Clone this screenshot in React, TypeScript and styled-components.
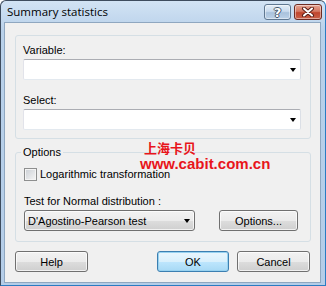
import styled, { createGlobalStyle } from "styled-components";

const GlobalStyle = createGlobalStyle`
  html, body { margin: 0; padding: 0; background: #fff; }
  body { font-family: "Liberation Sans", Tahoma, sans-serif; font-size: 11px; color: #000; }
  * { box-sizing: border-box; }
`;

const Window = styled.div`
  position: relative;
  width: 326px;
  height: 286px;
  display: flex;
  flex-direction: column;
  background: linear-gradient(#d2e3f4, #b9d1ea 30px, #b4cde8);
  border: 1px solid #3e4c5e;
  border-right-color: #2a7cc2;
  border-bottom-color: #2a7cc2;
  border-radius: 6px 6px 0 0;
  padding: 0 4px 2px 3px;
`;

const TitleBar = styled.div`
  height: 21px;
  display: flex;
  align-items: flex-start;
  justify-content: space-between;
  margin-right: -1px;
`;

const Title = styled.span`
  font-family: "Open Sans", "Noto Sans", sans-serif;
  font-size: 11.5px;
  line-height: 16px;
  padding: 3px 0 0 3px;
  color: #000;
`;

const CaptionButtons = styled.div`
  display: flex;
  gap: 3px;
  padding-top: 3px;
`;

const CaptionButton = styled.div<{ $close?: boolean }>`
  width: ${(p) => (p.$close ? "28px" : "27px")};
  height: 16px;
  border: 1px solid ${(p) => (p.$close ? "#6d2b22" : "#5f7891")};
  border-radius: 3px;
  display: flex;
  align-items: center;
  justify-content: center;
  background: ${(p) =>
    p.$close
      ? "linear-gradient(#e5a493, #d47862 45%, #c0452d 55%, #c9624a)"
      : "linear-gradient(#e4eef8, #c9dbee 45%, #a9c2dc 55%, #bcd2e8)"};
  box-shadow: inset 0 0 0 1px rgba(255, 255, 255, 0.45);
`;

const HelpGlyph = styled.span`
  font-family: "DejaVu Sans", sans-serif;
  font-weight: bold;
  font-size: 13px;
  line-height: 13px;
  color: #fff;
  text-shadow: -1px 0 #45566a, 1px 0 #45566a, 0 -1px #45566a, 0 1px #45566a;
`;

const Client = styled.div`
  flex: 1;
  background: #f0f0f0;
  border: 1px solid #8fa7c0;
  padding: 12px 9px 0 10px;
  display: flex;
  flex-direction: column;
`;

const Group = styled.div`
  border: 1px solid #d5dfe5;
  border-radius: 3px;
  padding: 8px 9px 8px 7px;
`;

const Label = styled.div`
  line-height: 13px;
  margin-bottom: 2px;
`;

const Field = styled.div<{ $gap?: number }>`
  margin-top: ${(p) => p.$gap ?? 0}px;
`;

const Combo = styled.div<{ $list?: boolean; $width?: number }>`
  position: relative;
  height: 21px;
  width: ${(p) => (p.$width ? `${p.$width}px` : "100%")};
  display: flex;
  align-items: center;
  padding-left: 3px;
  border: 1px solid;
  border-radius: ${(p) => (p.$list ? "3px" : "2px")};
  border-color: ${(p) => (p.$list ? "#707070" : "#abadb3 #dbdfe6 #e3e9ef #e2e3ea")};
  background: ${(p) =>
    p.$list ? "linear-gradient(#f2f2f2, #ebebeb 50%, #dddddd 51%, #cfcfcf)" : "#fff"};
  box-shadow: ${(p) => (p.$list ? "inset 0 0 0 1px rgba(255,255,255,0.7)" : "none")};
`;

const Arrow = styled.span`
  position: absolute;
  right: 4px;
  top: 8px;
  width: 0;
  height: 0;
  border-left: 3.5px solid transparent;
  border-right: 3.5px solid transparent;
  border-top: 4px solid #000;
`;

const Fieldset = styled.fieldset`
  margin: 7px 0 0 0;
  padding: 0 12px 10px 8px;
  border: 1px solid #d5dfe5;
  border-radius: 3px;
  min-width: 0;
`;

const Legend = styled.legend`
  padding: 0 2px;
  margin-left: -3px;
  line-height: 13px;
`;

const CheckRow = styled.label`
  display: flex;
  align-items: center;
  gap: 3px;
  margin-top: 9px;
  line-height: 13px;
`;

const CheckBox = styled.span`
  width: 13px;
  height: 13px;
  border: 1px solid #8e8f8f;
  background: linear-gradient(135deg, #cbcfd5, #f6f6f6);
  box-shadow: inset 0 0 0 1px #f4f4f4;
`;

const Row = styled.div`
  display: flex;
  justify-content: space-between;
  align-items: center;
`;

const Button = styled.button<{ $default?: boolean; $width?: number }>`
  height: 21px;
  width: ${(p) => p.$width ?? 73}px;
  padding: 0;
  font: inherit;
  color: #000;
  border: 1px solid ${(p) => (p.$default ? "#3c7fb1" : "#707070")};
  border-radius: 3px;
  background: ${(p) =>
    p.$default
      ? "linear-gradient(#eaf6fd, #d9f0fc 50%, #bee6fd 51%, #a7d9f5)"
      : "linear-gradient(#f2f2f2, #ebebeb 50%, #dddddd 51%, #cfcfcf)"};
  box-shadow: inset 0 0 0 1px ${(p) => (p.$default ? "#98d2f0" : "rgba(255,255,255,0.7)")};
`;

const Footer = styled.div`
  display: flex;
  align-items: center;
  margin-top: 9px;
  margin-right: 1px;
`;

const Spacer = styled.div`
  flex: 1;
`;

const Watermark = styled.div`
  position: absolute;
  left: 139px;
  top: 139px;
  color: #e8151b;
  font-weight: bold;
  pointer-events: none;
`;

const WmCn = styled.div`
  font-family: "Noto Sans CJK SC", sans-serif;
  font-size: 13px;
  line-height: 16px;
  padding-left: 4px;
`;

const WmUrl = styled.div`
  font-family: "Liberation Sans", Arial, sans-serif;
  font-size: 15px;
  line-height: 14px;
  margin-top: 1px;
`;

export default function App() {
  return (
    <>
      <GlobalStyle />
      <Window>
        <TitleBar>
          <Title>Summary statistics</Title>
          <CaptionButtons>
            <CaptionButton>
              <HelpGlyph>?</HelpGlyph>
            </CaptionButton>
            <CaptionButton $close>
              <svg width="14" height="10" viewBox="0 0 14 10">
                <path d="M3 1.5 L11 8.5 M11 1.5 L3 8.5" stroke="#5a1f16" strokeWidth="4" strokeLinecap="round" />
                <path d="M3 1.5 L11 8.5 M11 1.5 L3 8.5" stroke="#fff" strokeWidth="2" strokeLinecap="round" />
              </svg>
            </CaptionButton>
          </CaptionButtons>
        </TitleBar>
        <Client>
          <Group>
            <Field>
              <Label>Variable:</Label>
              <Combo>
                <Arrow />
              </Combo>
            </Field>
            <Field $gap={14}>
              <Label>Select:</Label>
              <Combo>
                <Arrow />
              </Combo>
            </Field>
          </Group>
          <Fieldset>
            <Legend>Options</Legend>
            <CheckRow>
              <CheckBox />
              Logarithmic transformation
            </CheckRow>
            <Field $gap={14}>
              <Label>Test for Normal distribution :</Label>
              <Row>
                <Combo $list $width={171}>
                  D'Agostino-Pearson test
                  <Arrow />
                </Combo>
                <Button $width={79}>Options...</Button>
              </Row>
            </Field>
          </Fieldset>
          <Footer>
            <Button>Help</Button>
            <Spacer />
            <Button $default $width={72}>OK</Button>
            <Button style={{ marginLeft: 8 }}>Cancel</Button>
          </Footer>
        </Client>
        <Watermark>
          <WmCn>上海卡贝</WmCn>
          <WmUrl>www.cabit.com.cn</WmUrl>
        </Watermark>
      </Window>
    </>
  );
}
